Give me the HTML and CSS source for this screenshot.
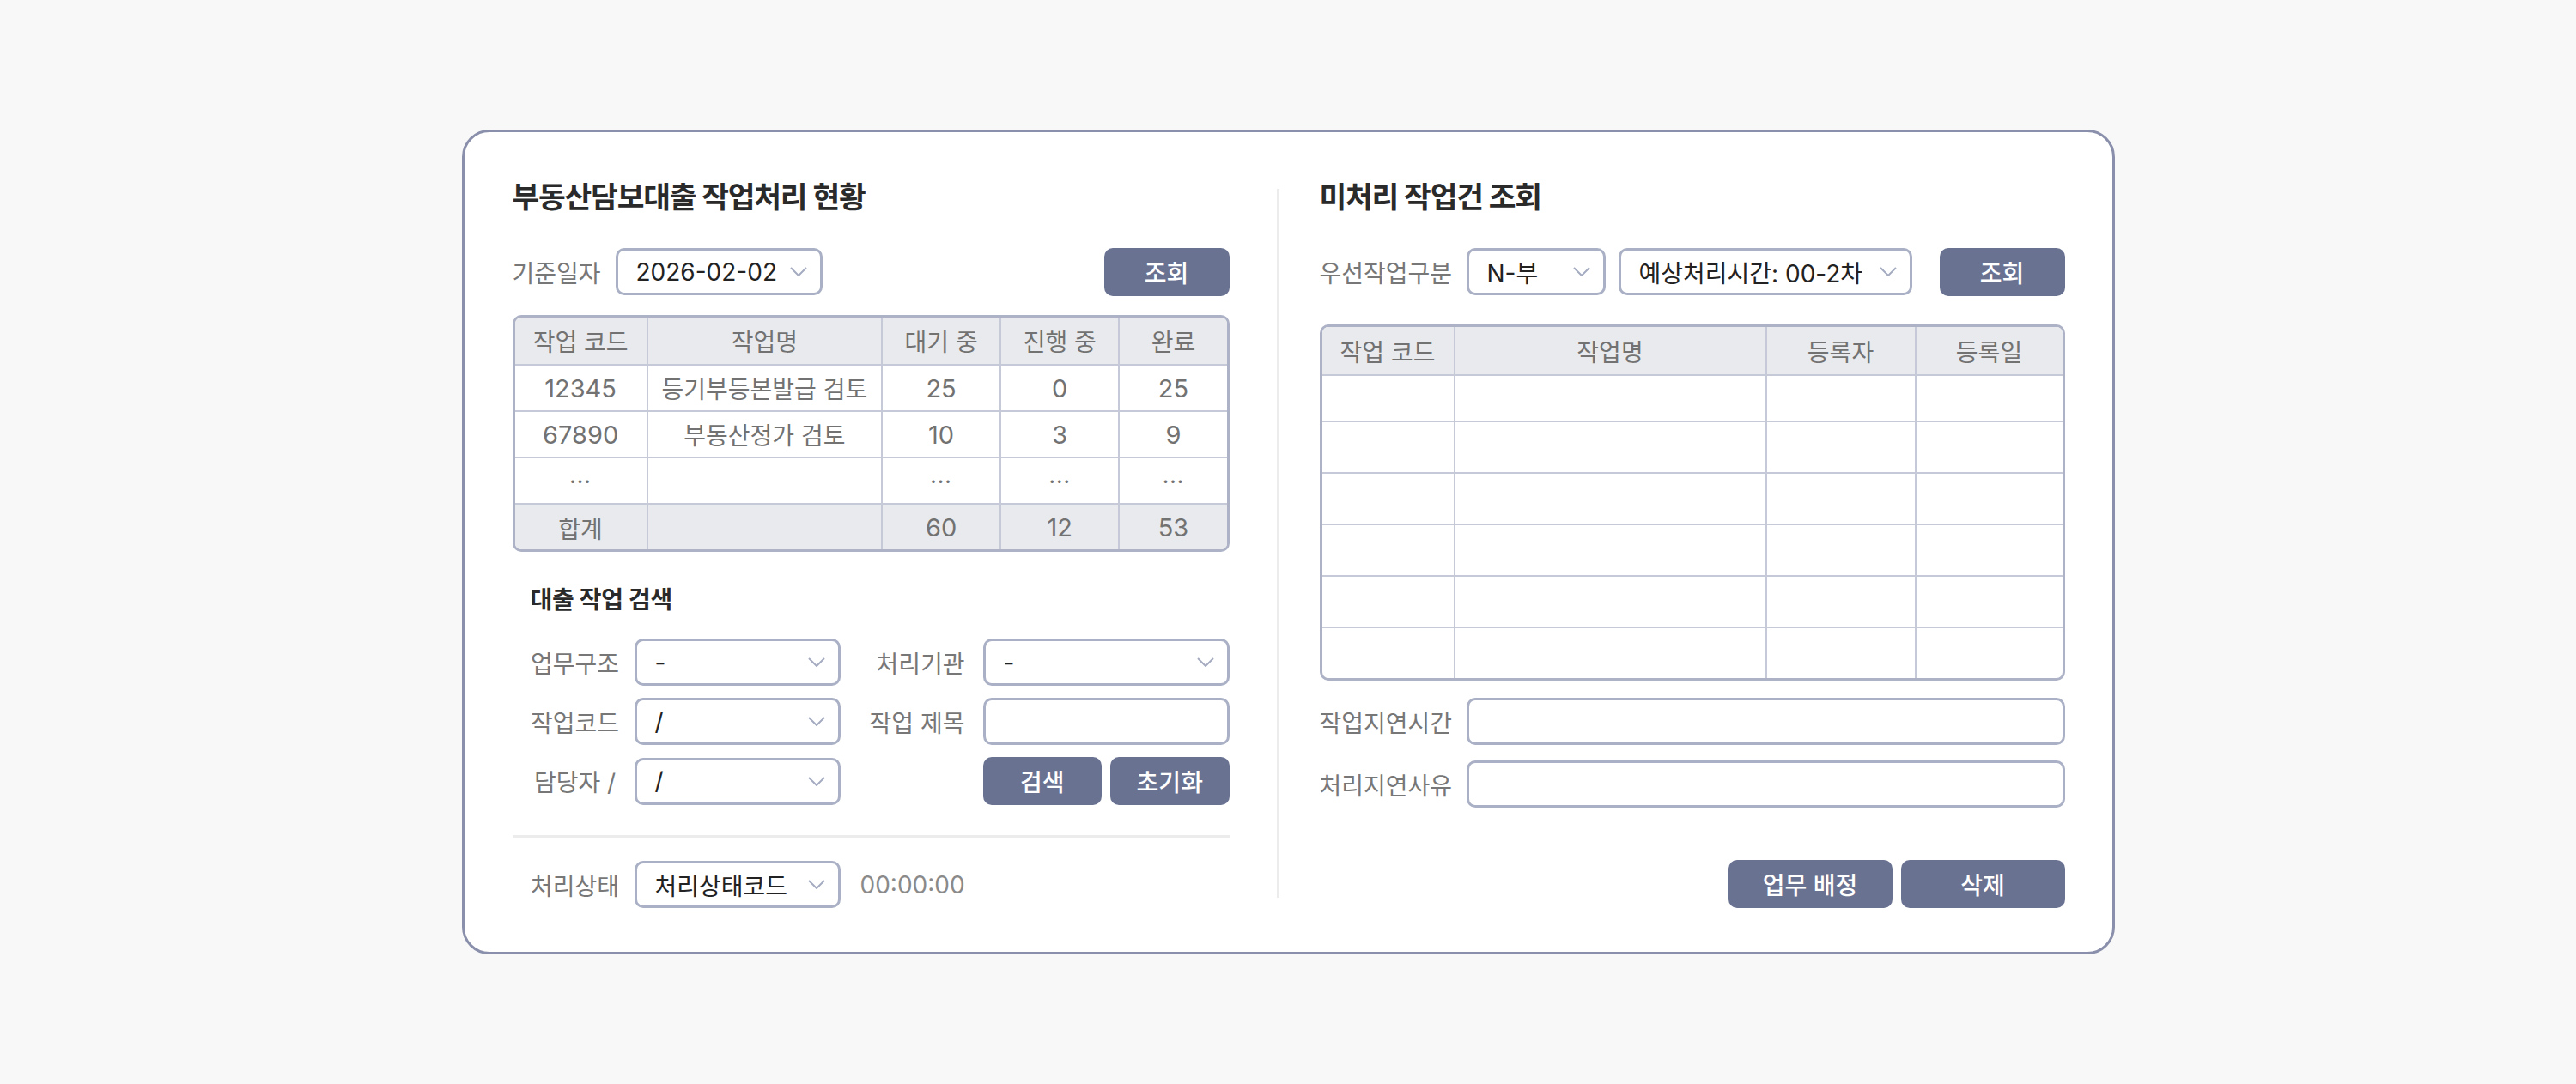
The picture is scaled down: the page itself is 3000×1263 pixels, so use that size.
FILE: index.html
```html
<!DOCTYPE html>
<html lang="ko">
<head>
<meta charset="utf-8">
<title>부동산담보대출 작업처리 현황</title>
<link rel="stylesheet" href="styles.css">
</head>
<body>
<main class="card">
  <section class="col col-left">
    <h2 class="title">부동산담보대출 작업처리 현황</h2>
    <div class="filter">
      <span class="label">기준일자</span>
      <div class="select select-date"><span class="num">2026-02-02</span><svg class="chev" viewBox="0 0 20 11"><path d="M1 1l9 9 9-9"/></svg></div>
      <button class="btn btn-query">조회</button>
    </div>
    <div class="table-wrap table-status">
      <table class="grid">
        <colgroup>
          <col class="w-code"><col class="w-name"><col class="w-num"><col class="w-num"><col class="w-last">
        </colgroup>
        <thead>
          <tr><th>작업 코드</th><th>작업명</th><th>대기 중</th><th>진행 중</th><th>완료</th></tr>
        </thead>
        <tbody>
          <tr><td class="num">12345</td><td>등기부등본발급 검토</td><td class="num">25</td><td class="num">0</td><td class="num">25</td></tr>
          <tr><td class="num">67890</td><td>부동산정가 검토</td><td class="num">10</td><td class="num">3</td><td class="num">9</td></tr>
          <tr><td class="dots">···</td><td></td><td class="dots">···</td><td class="dots">···</td><td class="dots">···</td></tr>
        </tbody>
        <tfoot>
          <tr><td>합계</td><td></td><td class="num">60</td><td class="num">12</td><td class="num">53</td></tr>
        </tfoot>
      </table>
    </div>
    <div class="search">
      <h3 class="subtitle">대출 작업 검색</h3>
      <div class="search-grid">
        <span class="label label-c">업무구조</span>
        <div class="select"><span class="num">-</span><svg class="chev" viewBox="0 0 20 11"><path d="M1 1l9 9 9-9"/></svg></div>
        <span class="label label-r">처리기관</span>
        <div class="select"><span class="num">-</span><svg class="chev" viewBox="0 0 20 11"><path d="M1 1l9 9 9-9"/></svg></div>

        <span class="label label-c">작업코드</span>
        <div class="select"><span class="num">/</span><svg class="chev" viewBox="0 0 20 11"><path d="M1 1l9 9 9-9"/></svg></div>
        <span class="label label-r">작업 제목</span>
        <input class="input" type="text">

        <span class="label label-c">담당자 /</span>
        <div class="select"><span class="num">/</span><svg class="chev" viewBox="0 0 20 11"><path d="M1 1l9 9 9-9"/></svg></div>
        <span></span>
        <div class="btn-pair"><button class="btn">검색</button><button class="btn">초기화</button></div>
      </div>
    </div>
    <div class="hline"></div>
    <div class="status-row">
      <span class="label label-c">처리상태</span>
      <div class="select"><span>처리상태코드</span><svg class="chev" viewBox="0 0 20 11"><path d="M1 1l9 9 9-9"/></svg></div>
      <span class="time num">00:00:00</span>
    </div>
  </section>

  <div class="vsep"></div>

  <section class="col col-right">
    <h2 class="title">미처리 작업건 조회</h2>
    <div class="filter">
      <span class="label label-wide">우선작업구분</span>
      <div class="select select-n"><span><span class="num">N-</span>부</span><svg class="chev" viewBox="0 0 20 11"><path d="M1 1l9 9 9-9"/></svg></div>
      <div class="select select-time"><span>예상처리시간<span class="num">: 00-2</span>차</span><svg class="chev" viewBox="0 0 20 11"><path d="M1 1l9 9 9-9"/></svg></div>
      <button class="btn btn-query">조회</button>
    </div>
    <div class="table-wrap table-pending">
      <table class="grid">
        <colgroup>
          <col class="p-code"><col class="p-name"><col class="p-user"><col class="p-date">
        </colgroup>
        <thead>
          <tr><th>작업 코드</th><th>작업명</th><th>등록자</th><th>등록일</th></tr>
        </thead>
        <tbody>
          <tr class="r-first"><td></td><td></td><td></td><td></td></tr>
          <tr><td></td><td></td><td></td><td></td></tr>
          <tr><td></td><td></td><td></td><td></td></tr>
          <tr><td></td><td></td><td></td><td></td></tr>
          <tr><td></td><td></td><td></td><td></td></tr>
          <tr class="r-last"><td></td><td></td><td></td><td></td></tr>
        </tbody>
      </table>
    </div>
    <div class="fields">
      <div class="field-row"><span class="label">작업지연시간</span><input class="input" type="text"></div>
      <div class="field-row"><span class="label">처리지연사유</span><input class="input" type="text"></div>
    </div>
    <div class="actions">
      <button class="btn btn-action">업무 배정</button>
      <button class="btn btn-action">삭제</button>
    </div>
  </section>
</main>
</body>
</html>
```

FILE: styles.css
```css
* { box-sizing: border-box; }

html, body { margin: 0; padding: 0; }

body {
  min-height: 100vh;
  background: #f8f8f8;
  display: flex;
  align-items: center;
  justify-content: center;
  font-family: Inter, "Noto Sans CJK KR", sans-serif;
  font-size: 28px;
  letter-spacing: 0;
  color: #222;
}

.num { font-size: 28px; letter-spacing: 0; }

.card {
  width: 1925px;
  height: 961px;
  background: #fff;
  border: 3px solid #8a90ab;
  border-radius: 32px;
  padding: 54px 55px 51px 56px;
  display: flex;
}

.col { display: flex; flex-direction: column; }
.col-left { width: 835px; flex: none; }
.col-right { flex: 1; min-width: 0; }

.vsep {
  width: 3px;
  flex: none;
  background: #ececec;
  margin: 12px 47px 12px 55px;
}

.title {
  margin: 0;
  font-size: 34.5px;
  line-height: 44px;
  font-weight: 700;
  color: #2a2a2a;
  letter-spacing: -1.2px;
}

.label { color: #777; white-space: nowrap; }

.filter {
  display: flex;
  align-items: center;
  height: 55px;
  margin-top: 37px;
}
.filter .label { margin-right: 17px; }
.filter .label-wide { width: 156px; margin-right: 15px; }

.select {
  height: 55px;
  border: 3px solid #aab0c5;
  border-radius: 10px;
  background: #fff;
  display: flex;
  align-items: center;
  justify-content: space-between;
  padding: 0 15px 0 21px;
  color: #222;
  white-space: nowrap;
}
.select .num { color: #222; }

.chev { width: 20px; height: 11px; flex: none; }
.chev path { fill: none; stroke: #a5abc0; stroke-width: 2; }

.select-date { width: 241px; }
.select-n { width: 162px; margin-right: 15px; }
.select-time { width: 342px; }

.btn {
  height: 56px;
  border: 0;
  border-radius: 10px;
  background: #6a7292;
  color: #fff;
  font-family: inherit;
  font-size: 28px;
  font-weight: 500;
  letter-spacing: 0;
  padding: 0;
  cursor: pointer;
}
.btn-query { width: 146px; margin-left: auto; }

/* tables */
.table-wrap {
  border: 3px solid #adb2c6;
  border-radius: 10px;
  overflow: hidden;
}
.table-status { margin-top: 23px; }
.table-pending { margin-top: 34px; }

.grid {
  width: 100%;
  border-collapse: separate;
  border-spacing: 0;
  table-layout: fixed;
}
.grid th, .grid td {
  padding: 0;
  text-align: center;
  vertical-align: middle;
  font-weight: 400;
  color: #727272;
  border-right: 2px solid #c6cad8;
  border-bottom: 2px solid #c6cad8;
}
.grid th:last-child, .grid td:last-child { border-right: 0; }
.grid thead th { background: #e9eaed; }

.w-code { width: 155px; }
.w-name { width: 273px; }
.w-num { width: 138px; }
.w-last { width: 124px; }

.p-code { width: 155px; }
.p-name { width: 363px; }
.p-user { width: 174px; }
.p-date { width: 170px; }

.table-status thead tr { height: 56px; }
.table-status tbody tr { height: 54px; }
.table-status tfoot tr { height: 53px; }
.table-status tfoot td { background: #e9eaed; border-bottom: 0; }
.grid .num { color: #727272; font-size: 29px; }
.dots { font-size: 26px; letter-spacing: 1px; color: #7a7a7a; }

.table-pending thead tr { height: 57px; }
.table-pending tbody tr { height: 60px; }
.table-pending tbody tr.r-first { height: 54px; }
.table-pending tbody tr.r-last { height: 58px; }
.table-pending tbody tr.r-last td { border-bottom: 0; }

/* search */
.search { padding-left: 21px; }
.subtitle {
  margin: 38px 0 27px;
  font-size: 28px;
  line-height: 36px;
  font-weight: 700;
  color: #2a2a2a;
  letter-spacing: -0.3px;
}
.search-grid {
  display: grid;
  grid-template-columns: 104px 240px 1fr 287px;
  column-gap: 17px;
  row-gap: 14px;
  align-items: center;
}
.label-c { text-align: center; }
.label-r { text-align: right; padding-right: 4px; }

.input {
  height: 55px;
  width: 100%;
  border: 3px solid #aab0c5;
  border-radius: 10px;
  background: #fff;
  font: inherit;
  padding: 0 18px;
  outline: none;
}

.btn-pair { display: flex; gap: 10px; }
.btn-pair .btn { flex: 1; }

.hline {
  height: 3px;
  background: #ececec;
  margin: 35px 0 27px;
}

.status-row {
  display: flex;
  align-items: center;
  padding-left: 21px;
}
.status-row .label { width: 104px; margin-right: 17px; }
.status-row .select { width: 240px; }
.time { margin-left: 23px; color: #8a8a8a; }

/* right side fields */
.fields {
  display: flex;
  flex-direction: column;
  gap: 18px;
  margin-top: 20px;
}
.field-row {
  display: grid;
  grid-template-columns: 156px 1fr;
  column-gap: 15px;
  align-items: center;
}

.actions {
  margin-top: auto;
  display: flex;
  justify-content: flex-end;
  gap: 10px;
}
.btn-action { width: 191px; }
```
